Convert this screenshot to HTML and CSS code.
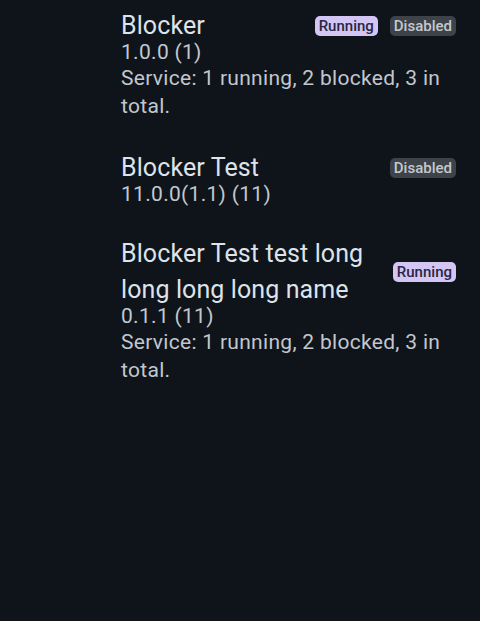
FILE: index.html
```html
<!DOCTYPE html>
<html>
<head>
<meta charset="utf-8">
<link rel="stylesheet" href="styles.css">
</head>
<body>
<main class="list">
  <section class="item">
    <div class="head">
      <div class="title">Blocker</div>
      <div class="badges">
        <span class="badge running">Running</span>
        <span class="badge disabled">Disabled</span>
      </div>
    </div>
    <div class="version">1.0.0 (1)</div>
    <div class="service">Service: 1 running, 2 blocked, 3 in total.</div>
  </section>
  <section class="item">
    <div class="head">
      <div class="title">Blocker Test</div>
      <div class="badges">
        <span class="badge disabled">Disabled</span>
      </div>
    </div>
    <div class="version">11.0.0(1.1) (11)</div>
  </section>
  <section class="item">
    <div class="head">
      <div class="title">Blocker Test test long long long long name</div>
      <div class="badges">
        <span class="badge running">Running</span>
      </div>
    </div>
    <div class="version">0.1.1 (11)</div>
    <div class="service">Service: 1 running, 2 blocked, 3 in total.</div>
  </section>
</main>
</body>
</html>
```
FILE: styles.css
```css
html, body {
  margin: 0;
  padding: 0;
  background: #0f141a;
  height: 100%;
}
body {
  font-family: Roboto, "Noto Sans", sans-serif;
  color: #c2c7ce;
}
.list {
  display: flex;
  flex-direction: column;
  padding: 8px 24px 0 121px;
  gap: 30px;
}
.item {
  display: flex;
  flex-direction: column;
}
.head {
  display: flex;
  align-items: center;
  gap: 24px;
}
.title {
  flex: 1;
  font-size: 25px;
  line-height: 36px;
  color: #dee3ea;
  letter-spacing: 0.1px;
}
.badges {
  display: flex;
  gap: 12px;
  flex-shrink: 0;
}
.badge {
  font-size: 15px;
  font-weight: 500;
  line-height: 20px;
  height: 20px;
  padding: 0 4px;
  border-radius: 5px;
}
.running {
  background: #d3c5f4;
  color: #2b2540;
}
.disabled {
  background: #3e4349;
  color: #c5c9cf;
}
.version {
  font-size: 21px;
  line-height: 24px;
  margin-top: -4px;
  letter-spacing: 0.3px;
}
.service {
  font-size: 21px;
  line-height: 28px;
  letter-spacing: 0.3px;
}
```
